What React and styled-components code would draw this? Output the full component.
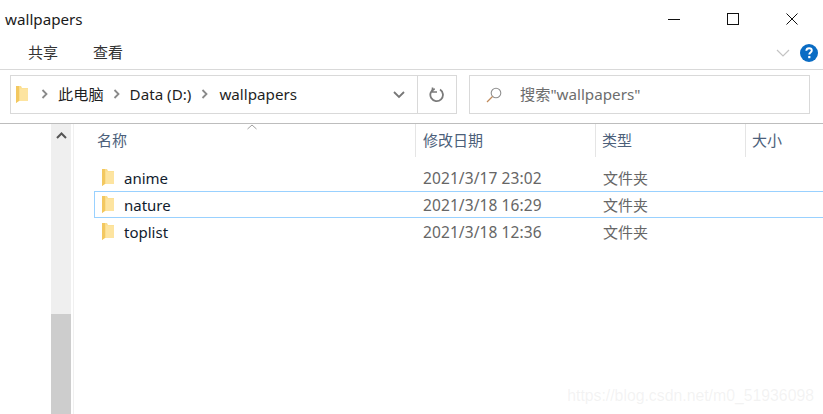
import React from "react";
import styled, { createGlobalStyle } from "styled-components";

const Global = createGlobalStyle`
  html, body { margin: 0; padding: 0; background: #fff; }
  body { font-family: "Noto Sans", "Noto Sans CJK SC", sans-serif; overflow: hidden; }
  * { box-sizing: border-box; }
`;

const Win = styled.div`
  position: relative;
  width: 823px;
  height: 414px;
  overflow: hidden;
  display: flex;
  flex-direction: column;
`;
const TitleBar = styled.div`
  height: 38px;
  display: flex;
  align-items: center;
  justify-content: space-between;
  padding: 0 2px 0 5px;
`;
const Title = styled.div`
  font-size: 15.2px;
  color: #1a1a1a;
`;
const WinButtons = styled.div`
  display: flex;
`;
const WinButton = styled.div`
  width: 59px;
  height: 38px;
  display: flex;
  align-items: center;
  justify-content: center;
`;
const Ribbon = styled.div`
  height: 32px;
  border-bottom: 1px solid #d9d9d9;
  display: flex;
  align-items: flex-start;
  justify-content: space-between;
  padding-right: 5px;
`;
const Tabs = styled.div`
  display: flex;
  gap: 35px;
  padding: 4px 0 0 28px;
`;
const Tab = styled.div`
  font-size: 15px;
  line-height: 20px;
  color: #333;
`;
const RibbonRight = styled.div`
  display: flex;
  align-items: center;
  gap: 10px;
  padding-top: 6px;
`;
const AddressRow = styled.div`
  height: 54px;
  padding: 5px 13px 0 10px;
  display: flex;
  gap: 12px;
  align-items: flex-start;
  border-bottom: 1px solid #bdbdbd;
`;
const AddressBox = styled.div`
  width: 447px;
  height: 39px;
  border: 1px solid #d9d9d9;
  display: flex;
  align-items: center;
`;
const Crumbs = styled.div`
  flex: 1;
  display: flex;
  align-items: center;
  padding-left: 5px;
  font-size: 15.2px;
  color: #1f1f1f;
`;
const Crumb = styled.span`
  line-height: 20px;
  margin-top: -1px;
`;
const Sep = styled.span`
  display: flex;
  width: ${p => p.$w || 28}px;
  justify-content: center;
  padding-left: ${p => p.$shift || 0}px;
  margin-top: -1px;
`;
const DropCell = styled.div`
  width: 37px;
  display: flex;
  justify-content: center;
`;
const RefreshCell = styled.div`
  width: 39px;
  height: 37px;
  border-left: 1px solid #d9d9d9;
  display: flex;
  align-items: center;
  justify-content: center;
`;
const SearchBox = styled.div`
  width: 341px;
  height: 39px;
  border: 1px solid #d9d9d9;
  display: flex;
  align-items: center;
  padding-left: 16px;
  gap: 18px;
  font-size: 15.2px;
  color: #6d6d6d;
`;
const SearchText = styled.span`
  margin-top: -4px;
`;
const Body = styled.div`
  flex: 1;
  display: flex;
  min-height: 0;
`;
const NavPane = styled.div`
  width: 51px;
`;
const ScrollTrack = styled.div`
  width: 20px;
  background: #efefef;
  display: flex;
  flex-direction: column;
  justify-content: space-between;
  align-items: center;
`;
const ScrollUp = styled.div`
  height: 22px;
  display: flex;
  align-items: center;
`;
const ScrollThumb = styled.div`
  width: 100%;
  height: 100px;
  background: #cdcdcd;
`;
const PaneLine = styled.div`
  width: 3px;
  border-right: 1px solid #f0f0f0;
`;
const List = styled.div`
  flex: 1;
  padding-left: 20px;
  min-width: 0;
`;
const Header = styled.div`
  position: relative;
  height: 33px;
  display: flex;
  margin-bottom: 7px;
`;
const SortArrow = styled.div`
  position: absolute;
  left: 153px;
  top: 0;
  line-height: 0;
`;
const HeadCell = styled.div`
  width: ${p => p.$w}px;
  flex: none;
  height: 33px;
  border-right: ${p => (p.$last ? "none" : "1px solid #e5e5e5")};
  padding-left: ${p => p.$pad}px;
  padding-top: 4px;
  font-size: 15px;
  line-height: 24px;
  color: #4c607a;
  white-space: nowrap;
`;
const Row = styled.div`
  height: 27px;
  display: flex;
  align-items: center;
  border: 1px solid ${p => (p.$selected ? "#99d1ff" : "transparent")};
  border-right: none;
  font-size: 15px;
`;
const NameCell = styled.div`
  width: 321px;
  flex: none;
  display: flex;
  align-items: center;
  gap: 10px;
  padding-left: 7px;
  color: #111c2e;
`;
const DateCell = styled.div`
  width: 180px;
  flex: none;
  padding-left: 7px;
  font-size: 15.5px;
  letter-spacing: 0.1px;
  color: #666;
  white-space: nowrap;
`;
const TypeCell = styled.div`
  color: #666;
  font-size: 15px;
  padding-left: 7px;
`;
const Watermark = styled.div`
  position: absolute;
  right: 9px;
  bottom: 9px;
  font-family: "Liberation Sans", sans-serif;
  font-size: 15.8px;
  color: rgba(200, 200, 200, 0.22);
  line-height: 18px;
`;

const Folder = () => (
  <svg width="12" height="18" viewBox="0 0 12 18">
    <path d="M0 0h5l1 2h6v13H4l-1.500 0L0 17z" fill="#fbdd8c" />
    <path d="M0 0h3v15L0 17z" fill="#f3c860" />
    <path d="M4 2.500h8V15H4z" fill="#fde4a0" />
  </svg>
);
const Chevron = () => (
  <svg width="8" height="10" viewBox="0 0 8 10">
    <path d="M1.500 1l4 4-4 4" fill="none" stroke="#8a8a8a" strokeWidth="1.800" />
  </svg>
);

const rows = [
  { name: "anime", date: "2021/3/17 23:02" },
  { name: "nature", date: "2021/3/18 16:29", selected: true },
  { name: "toplist", date: "2021/3/18 12:36" },
];

export default function App() {
  return (
    <Win>
      <Global />
      <TitleBar>
        <Title>wallpapers</Title>
        <WinButtons>
          <WinButton>
            <svg width="12" height="12" viewBox="0 0 12 12"><path d="M0 6.500h12" stroke="#111" /></svg>
          </WinButton>
          <WinButton>
            <svg width="12" height="12" viewBox="0 0 12 12"><rect x=".5" y=".5" width="11" height="11" fill="none" stroke="#111" /></svg>
          </WinButton>
          <WinButton>
            <svg width="12" height="12" viewBox="0 0 12 12"><path d="M.5.5l11 11M11.500.5l-11 11" stroke="#111" /></svg>
          </WinButton>
        </WinButtons>
      </TitleBar>
      <Ribbon>
        <Tabs>
          <Tab>共享</Tab>
          <Tab>查看</Tab>
        </Tabs>
        <RibbonRight>
          <svg width="14" height="8" viewBox="0 0 14 8"><path d="M1 1l6 6 6-6" fill="none" stroke="#c4c4c4" strokeWidth="1.200" /></svg>
          <svg width="18" height="18" viewBox="0 0 18 18">
            <circle cx="9" cy="9" r="9" fill="#0a6cc4" />
            <path d="M6.300 6.800C6.400 5 7.600 4.200 9.100 4.200c1.600 0 2.700 1 2.700 2.300 0 2-2.500 2-2.500 4" fill="none" stroke="#fff" strokeWidth="1.900" />
            <rect x="8.200" y="12" width="2.200" height="2.200" fill="#fff" />
          </svg>
        </RibbonRight>
      </Ribbon>
      <AddressRow>
        <AddressBox>
          <Crumbs>
            <Folder />
            <Sep $w={30} $shift={4}><Chevron /></Sep>
            <Crumb>此电脑</Crumb>
            <Sep $w={26}><Chevron /></Sep>
            <Crumb>Data (D:)</Crumb>
            <Sep $w={28}><Chevron /></Sep>
            <Crumb>wallpapers</Crumb>
          </Crumbs>
          <DropCell>
            <svg width="12" height="8" viewBox="0 0 12 8"><path d="M1 1l5 5 5-5" fill="none" stroke="#777" strokeWidth="1.800" /></svg>
          </DropCell>
          <RefreshCell>
            <svg width="16" height="16" viewBox="0 0 16 16">
              <path d="M4.200 2.600A6.300 6.300 0 1 0 9.500 1.900" fill="none" stroke="#7a7a7a" strokeWidth="1.800" transform="rotate(15 8 8)" />
              <path d="M3.500 0.500v4.500h4.500" fill="none" stroke="#7a7a7a" strokeWidth="1.600" />
            </svg>
          </RefreshCell>
        </AddressBox>
        <SearchBox>
          <svg width="16" height="16" viewBox="0 0 16 16">
            <circle cx="10" cy="6" r="4.800" fill="none" stroke="#8f8f8f" strokeWidth="1.100" />
            <path d="M6.500 9.500L1 15" stroke="#c08a5a" strokeWidth="1.200" />
          </svg>
          <SearchText>搜索"wallpapers"</SearchText>
        </SearchBox>
      </AddressRow>
      <Body>
        <NavPane />
        <ScrollTrack>
          <ScrollUp>
            <svg width="11" height="7" viewBox="0 0 11 7"><path d="M1 6l4.500-4.500L10 6" fill="none" stroke="#555" strokeWidth="2" /></svg>
          </ScrollUp>
          <ScrollThumb />
        </ScrollTrack>
        <PaneLine />
        <List>
          <Header>
            <SortArrow>
              <svg width="10" height="6" viewBox="0 0 10 6"><path d="M.5 5L5 1l4.500 4" fill="none" stroke="#a0a0a0" /></svg>
            </SortArrow>
            <HeadCell $w={322} $pad={3}>名称</HeadCell>
            <HeadCell $w={180} $pad={7}>修改日期</HeadCell>
            <HeadCell $w={150} $pad={6}>类型</HeadCell>
            <HeadCell $w={76} $pad={6} $last>大小</HeadCell>
          </Header>
          {rows.map(r => (
            <Row key={r.name} $selected={r.selected}>
              <NameCell>
                <Folder />
                <span>{r.name}</span>
              </NameCell>
              <DateCell>{r.date}</DateCell>
              <TypeCell>文件夹</TypeCell>
            </Row>
          ))}
        </List>
      </Body>
      <Watermark>https://blog.csdn.net/m0_51936098</Watermark>
    </Win>
  );
}
